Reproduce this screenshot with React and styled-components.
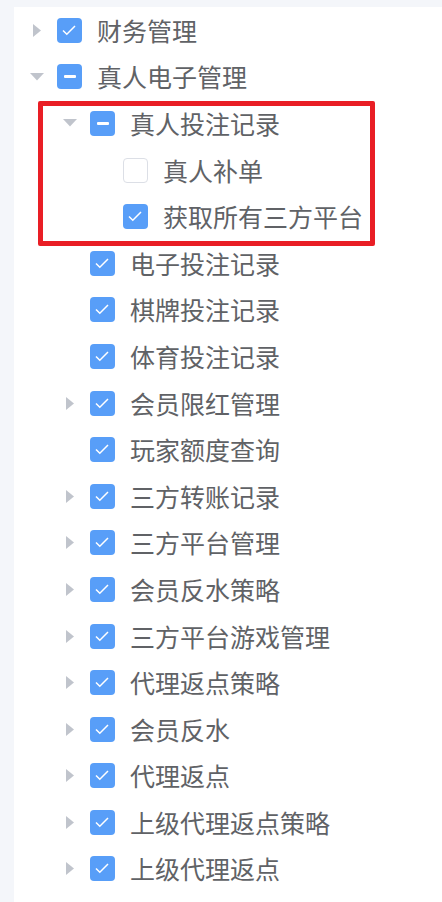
import React from "react";
import styled, { createGlobalStyle } from "styled-components";

const GlobalStyle = createGlobalStyle`
  html, body {
    margin: 0;
    padding: 0;
    background: #f4f6fa;
  }
  body {
    font-family: "Noto Sans CJK SC", "Noto Sans", sans-serif;
  }
`;

const tree = [
  { label: "财务管理", state: "on", arrow: "right" },
  {
    label: "真人电子管理",
    state: "half",
    arrow: "down",
    children: [
      {
        label: "真人投注记录",
        state: "half",
        arrow: "down",
        children: [
          { label: "真人补单", state: "off" },
          { label: "获取所有三方平台", state: "on" },
        ],
      },
      { label: "电子投注记录", state: "on" },
      { label: "棋牌投注记录", state: "on" },
      { label: "体育投注记录", state: "on" },
      { label: "会员限红管理", state: "on", arrow: "right" },
      { label: "玩家额度查询", state: "on" },
      { label: "三方转账记录", state: "on", arrow: "right" },
      { label: "三方平台管理", state: "on", arrow: "right" },
      { label: "会员反水策略", state: "on", arrow: "right" },
      { label: "三方平台游戏管理", state: "on", arrow: "right" },
      { label: "代理返点策略", state: "on", arrow: "right" },
      { label: "会员反水", state: "on", arrow: "right" },
      { label: "代理返点", state: "on", arrow: "right" },
      { label: "上级代理返点策略", state: "on", arrow: "right" },
      { label: "上级代理返点", state: "on", arrow: "right" },
    ],
  },
];

const Arrow = ({ dir }) => {
  if (dir === "down") {
    return (
      <svg width="14" height="8" viewBox="0 0 14 8">
        <path d="M0 0 L14 0 L7 7.5 Z" fill="#c0c4cc" />
      </svg>
    );
  }
  return (
    <svg width="8" height="13" viewBox="0 0 8 13">
      <path d="M0 0 L8 6.5 L0 13 Z" fill="#c0c4cc" />
    </svg>
  );
};

const Check = ({ state }) => (
  <Box $state={state}>
    {state === "on" && (
      <svg width="25" height="25" viewBox="0 0 25 25">
        <polyline
          points="6,12.5 9.8,16.3 18,8"
          fill="none"
          stroke="#fff"
          strokeWidth="1.5"
        />
      </svg>
    )}
    {state === "half" && <Dash />}
  </Box>
);

const Node = ({ item, level }) => (
  <>
    <Row $level={level}>
      <Caret>{item.arrow && <Arrow dir={item.arrow} />}</Caret>
      <Check state={item.state} />
      <Label>{item.label}</Label>
    </Row>
    {item.children &&
      item.children.map((c) => (
        <Node key={c.label} item={c} level={level + 1} />
      ))}
  </>
);

const App = () => {
  return (
    <>
      <GlobalStyle />
      <Panel>
        {tree.map((t) => (
          <Node key={t.label} item={t} level={0} />
        ))}
        <Highlight />
      </Panel>
    </>
  );
};

const Panel = styled.div`
  position: relative;
  margin: 7px 0 0 14px;
  background: #fff;
  min-height: 895px;
`;

const Row = styled.div`
  display: flex;
  align-items: center;
  height: 46.6px;
  padding-left: ${(p) => 8 + p.$level * 33}px;
`;

const Caret = styled.div`
  width: 30px;
  height: 30px;
  display: flex;
  align-items: center;
  justify-content: center;
  margin-right: 5px;
`;

const Box = styled.div`
  box-sizing: border-box;
  width: 25px;
  height: 25px;
  border-radius: 4px;
  flex-shrink: 0;
  display: flex;
  align-items: center;
  justify-content: center;
  background: ${(p) => (p.$state === "off" ? "#fff" : "#589ef8")};
  border: ${(p) => (p.$state === "off" ? "1px solid #dcdfe6" : "none")};
  svg {
    display: block;
  }
`;

const Dash = styled.div`
  width: 12px;
  height: 3px;
  background: #fff;
  border-radius: 1px;
`;

const Label = styled.span`
  margin-left: 15px;
  font-size: 25px;
  line-height: 1;
  color: #606266;
  white-space: nowrap;
`;

const Highlight = styled.div`
  position: absolute;
  left: 24px;
  top: 94px;
  width: 337px;
  height: 145px;
  box-sizing: border-box;
  border: 5px solid #e91e25;
  border-radius: 2px;
  pointer-events: none;
`;

export default App;
